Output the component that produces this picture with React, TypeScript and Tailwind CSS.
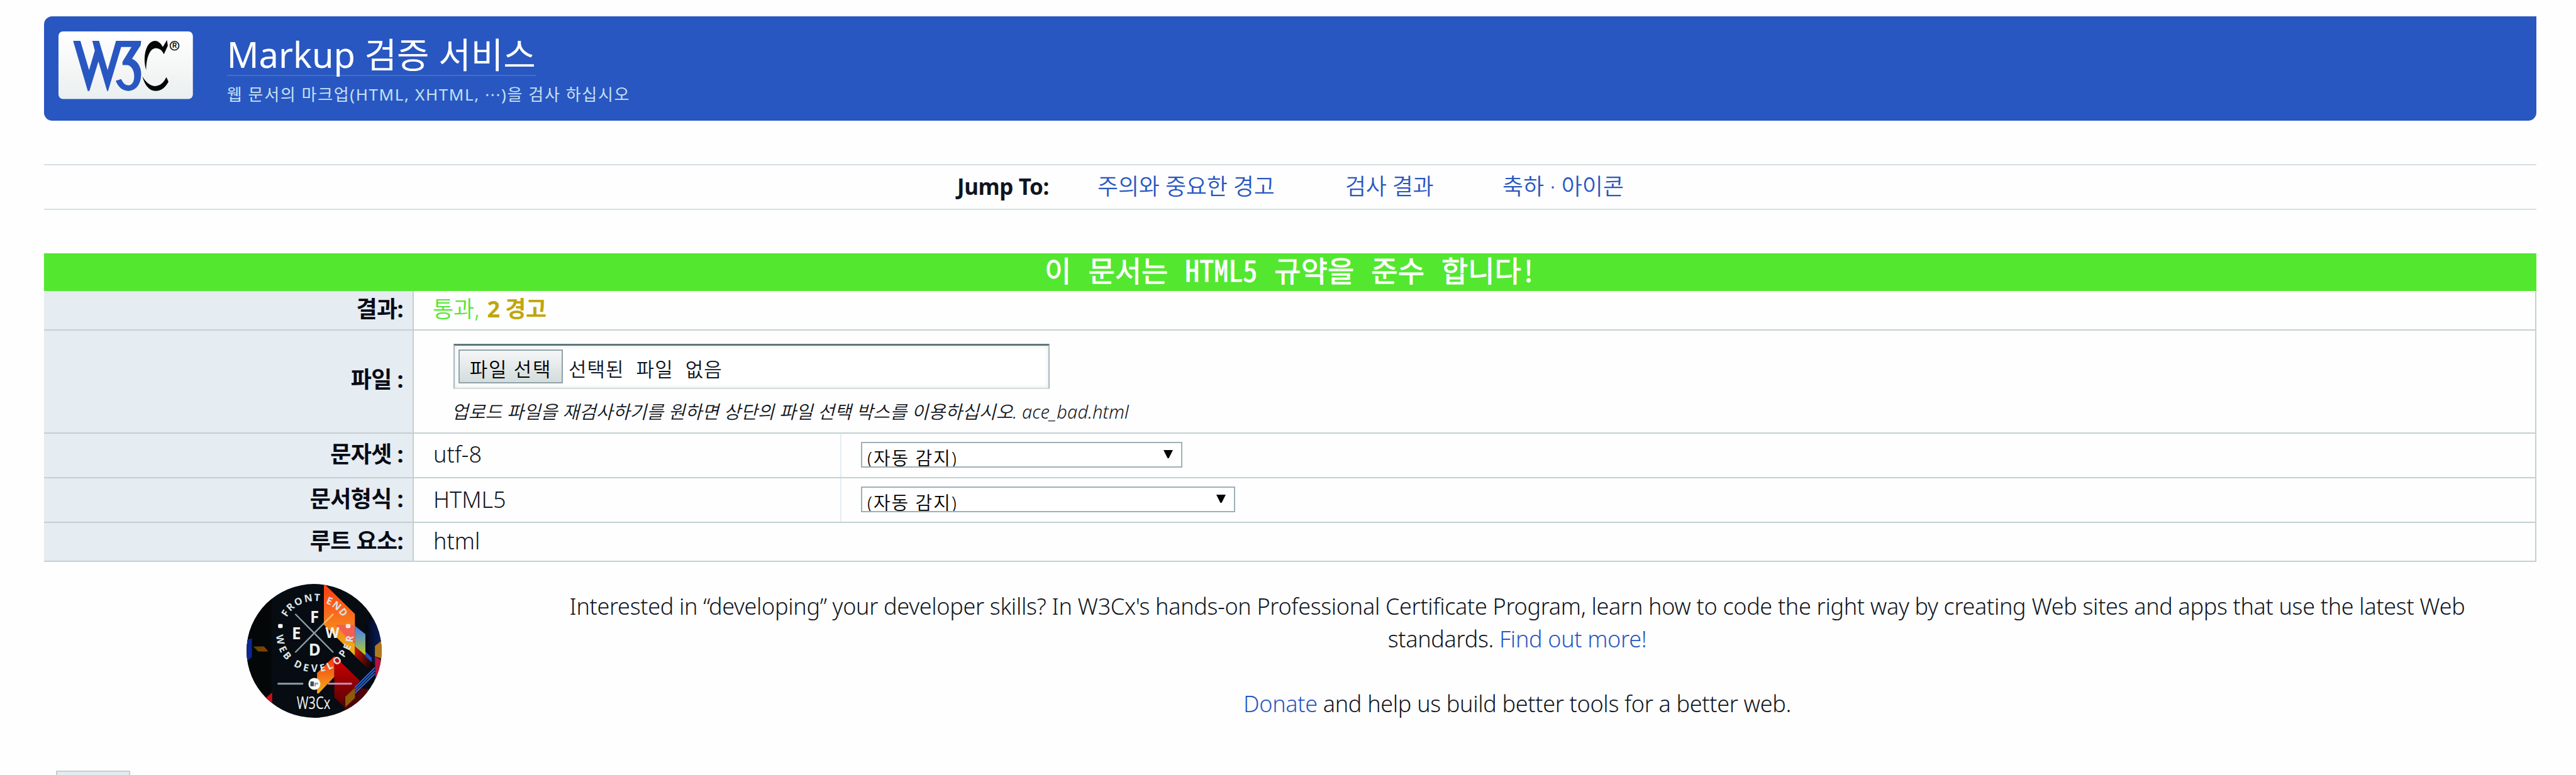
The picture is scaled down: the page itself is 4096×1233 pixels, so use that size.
import type { ReactNode } from "react";

const FRONT_END: [string, number, number, number][] = [
  ["F", 535, 378, -56], ["R", 582, 320, -42], ["O", 655, 270, -26], ["N", 748, 238, -10], ["T", 830, 232, 4],
  ["E", 945, 264, 22], ["N", 1012, 308, 38], ["D", 1072, 368, 54],
];
const WEB_DEVELOPER: [string, number, number, number][] = [
  ["W", 490, 622, 80], ["E", 515, 710, 64], ["B", 555, 770, 50], ["D", 655, 850, 26], ["E", 728, 880, 13],
  ["V", 805, 885, 0], ["E", 880, 880, -13], ["L", 945, 862, -26], ["O", 1015, 815, -40], ["P", 1068, 750, -54],
  ["E", 1108, 690, -66], ["R", 1130, 615, -80],
];

function T({ className = "", children }: { className?: string; children: ReactNode }) {
  return <span className={`whitespace-nowrap ${className}`}>{children}</span>;
}

function W3CLogo() {
  return (
    <svg viewBox="60 48 1239 624" preserveAspectRatio="none" className="h-[107.6px] w-[213.7px]">
      <defs>
        <linearGradient id="plate" x1="0" y1="0" x2="0" y2="1">
          <stop offset="0" stopColor="#ffffff" />
          <stop offset="0.6" stopColor="#f4f5f5" />
          <stop offset="1" stopColor="#e9eff0" />
        </linearGradient>
      </defs>
      <rect x="60" y="48" width="1239" height="624" rx="42" fill="url(#plate)" />
      <path fill="#2957c1" d="M195 135H262L342 405L395 225L372 135H434L513 405L590 135H822L818 175L738 300C800 325 822 390 822 440C822 540 770 597 705 597C645 597 605 550 588 503L638 487C655 525 675 545 705 545C740 545 758 510 758 460C758 400 725 358 690 358H650V328L733 192H638L517 597H508L428 325L345 597H330Z" />
      <path fill="#050607" d="M1060 128L1068 180L1032 258C1010 215 985 200 950 203C900 212 870 290 868 405C845 330 850 240 880 185C920 118 985 118 1022 192Z" />
      <path fill="#050607" d="M833 462C865 515 900 550 955 552C1000 548 1030 520 1055 470L1074 512C1045 565 1010 597 955 597C900 597 855 545 833 462Z" />
      <circle cx="1130" cy="180" r="40" fill="none" stroke="#26302f" strokeWidth="11" />
      <text x="1130" y="201" textAnchor="middle" fontSize="58" fontWeight="700" fill="#050607" className="font-['Liberation_Sans',sans-serif]">R</text>
    </svg>
  );
}

function Badge() {
  return (
    <svg viewBox="178 108 1250 1235" preserveAspectRatio="none" className="h-[213px] w-[215px]">
      <defs>
        <clipPath id="disc"><ellipse cx="803" cy="725.5" rx="624" ry="617" /></clipPath>
        <linearGradient id="flame" x1="0" y1="0" x2="0" y2="1">
          <stop offset="0" stopColor="#fb3d15" /><stop offset="0.4" stopColor="#fa6a1c" /><stop offset="1" stopColor="#e9b81c" />
        </linearGradient>
        <linearGradient id="ember" x1="0" y1="0" x2="0" y2="1">
          <stop offset="0" stopColor="#fb3010" /><stop offset="1" stopColor="#ecb01c" />
        </linearGradient>
        <linearGradient id="blood" x1="0" y1="0" x2="0" y2="1">
          <stop offset="0" stopColor="#d80000" /><stop offset="1" stopColor="#4d0004" />
        </linearGradient>
        <linearGradient id="sea" x1="0" y1="0" x2="0" y2="1">
          <stop offset="0" stopColor="#3f7cf0" /><stop offset="0.45" stopColor="#6f9fa8" /><stop offset="1" stopColor="#c3cc14" />
        </linearGradient>
        <linearGradient id="fade" x1="0" y1="0" x2="1" y2="0.6">
          <stop offset="0" stopColor="#d41500" /><stop offset="1" stopColor="#120508" />
        </linearGradient>
        <linearGradient id="navy" x1="0" y1="0" x2="1" y2="0">
          <stop offset="0" stopColor="#03060e" /><stop offset="1" stopColor="#0a1f66" />
        </linearGradient>
        <linearGradient id="rust" x1="0" y1="0" x2="1" y2="0">
          <stop offset="0" stopColor="#4f4a00" /><stop offset="1" stopColor="#9c3b00" />
        </linearGradient>
      </defs>
      <g clipPath="url(#disc)">
        <rect x="178" y="108" width="1250" height="1235" fill="#070b12" />
        <rect x="178" y="108" width="230" height="1235" fill="#040708" />
        <path d="M1275 470L1340 440L1428 430V660L1365 690V860L1275 740Z" fill="url(#navy)" />
        <path d="M178 625L228 610V780L190 815H178Z" fill="#0d2791" />
        <path d="M240 685H340L378 731H285Z" fill="url(#rust)" />
        <path d="M355 1160L415 1110V1210Z" fill="#c8101c" />
        <path d="M893 108L905 115L1180 385V770L893 485Z" fill="url(#flame)" />
        <path d="M1000 485H1180V660L1110 610Z" fill="#f4604f" />
        <path d="M1180 495L1277 572V768L1180 685Z" fill="url(#sea)" />
        <path d="M1180 685L1277 768L1345 830V910L1310 900L1180 775Z" fill="url(#fade)" />
        <path d="M1277 732L1335 790V830L1277 775Z" fill="#1f4fc4" />
        <path d="M1365 680L1428 630V800L1365 775Z" fill="#b07a1a" />
        <path d="M1365 775L1428 815V985H1370Z" fill="#b5143a" />
        <path d="M830 930L990 775V965L845 1118H830Z" fill="url(#ember)" />
        <path d="M990 775L1050 830L1225 1000L1180 1060L1310 1080L1200 1260H1095L990 1155Z" fill="url(#blood)" />
        <path d="M1180 1060L1300 1080L1200 1270H1085L1080 1160Z" fill="#4b0509" />
        <path d="M1090 1150L1180 1065V1160L1092 1245Z" fill="#8f5a05" />
        <path d="M1180 1065L1365 880M1180 1090L1365 908M1180 1115L1365 936" stroke="#2f66d6" strokeWidth="12" />
      </g>
      <path d="M628 385L980 740" stroke="#8c9ea4" strokeWidth="14" />
      <path d="M628 740L895 470" stroke="#8c9ea4" strokeWidth="14" />
      <path d="M895 470L980 385" stroke="#f8bd74" strokeWidth="14" />
      <path d="M465 1028H702" stroke="#8c9ea4" strokeWidth="17" />
      <path d="M930 1028H1152" stroke="#c98db4" strokeWidth="17" />
      <g className="font-['Open_Sans','Noto_Sans',sans-serif]" fill="#eef3f3" textAnchor="middle" fontWeight="700">
        <g fontSize="150">
          <text x="807" y="466">F</text>
          <text x="638" y="616">E</text>
          <text x="972" y="608" fontSize="132">W</text>
          <text x="807" y="770">D</text>
        </g>
        <g fontSize="92" fill="#dbe5e6">
          {[...FRONT_END, ...WEB_DEVELOPER].map(([c, x, y, r], i) => (
            <text key={i} transform={`translate(${x} ${y}) rotate(${r})`} y="33">{c}</text>
          ))}
        </g>
        <text x="797" y="1263" fontSize="162" fontWeight="500" textLength="312" lengthAdjust="spacingAndGlyphs">W3Cx</text>
      </g>
      <rect x="470" y="477" width="42" height="38" rx="10" fill="#f4f7f7" />
      <rect x="1096" y="477" width="42" height="38" rx="10" fill="#ffe6e0" />
      <circle cx="805" cy="1030" r="55" fill="#f8fafa" />
      <path d="M768 1008H800V1052H768Z" fill="#3f4b50" />
      <path d="M806 1020H840V1034H818V1052H806Z" fill="#8b9698" />
    </svg>
  );
}

function Row({ label, labelTop, height, children }: { label: string; labelTop: string; height: string; children: ReactNode }) {
  return (
    <div className={`flex border-b-2 border-[#c3d0d1] ${height}`}>
      <div className={`flex w-[588px] shrink-0 justify-end border-r-2 border-[#c3d0d1] bg-[#e5ecf2] pr-[15px] font-bold text-[#090b15] ${labelTop}`}>
        <T className="h-[50px] text-[36px] leading-[50px] tracking-[-0.6px]">{label}</T>
      </div>
      {children}
    </div>
  );
}

function Select({ className }: { className: string }) {
  return (
    <div className={`ml-[31px] flex h-[41px] justify-between overflow-hidden border-2 border-[#9fb0b4] bg-white pr-[13px] pl-[8px] ${className}`}>
      <T className="pt-[6px] text-[29px] leading-[36px] tracking-[1.9px] text-black">(자동 감지)</T>
      <svg viewBox="0 0 15 13" className="mt-[11px] h-[13px] w-[15px]"><path d="M0 0H15L8.5 13H6.5Z" fill="#050505" /></svg>
    </div>
  );
}

export default function App() {
  return (
    <div className="h-[1233px] w-[4096px] overflow-hidden bg-[#fefefe] pt-[26px] pl-[70px] font-[350] text-[#101520] font-['Noto_Sans','Noto_Sans_CJK_KR',sans-serif]">
      <header className="flex h-[166px] w-[3963px] rounded-[13px] rounded-tr-none bg-[#2957c1] pt-[24px] pl-[23px]">
        <W3CLogo />
        <div className="ml-[54px] flex flex-col items-start">
          <T className="h-[70.5px] border-b-2 border-[#4170be] text-[56px] leading-[72px] font-normal text-white">Markup 검증 서비스</T>
          <T className="mt-[9px] text-[26px] leading-[40px] font-normal tracking-[1.62px] text-[#c5e1f4]">웹 문서의 마크업(HTML, XHTML, ···)을 검사 하십시오</T>
        </div>
      </header>
      <nav className="mt-[69px] flex h-[73px] w-[3963px] border-y-2 border-[#d5e0e3] pl-[1452px] text-[36px] leading-[68px] text-[#2957c1]">
        <div className="w-[223px] text-[35px] font-bold text-[#101520]"><T className="tracking-[-0.4px]">Jump To:</T></div>
        <div className="w-[394px]"><T className="tracking-[-0.2px]">주의와 중요한 경고</T></div>
        <div className="w-[250px]"><T className="tracking-[-0.3px]">검사 결과</T></div>
        <div><T>축하 · 아이콘</T></div>
      </nav>
      <main className="mt-[69px] w-[3963px]">
        <h2 className="h-[60px] bg-[#53e730] text-center text-[46px] leading-[50px] font-normal text-white font-['Noto_Sans_Mono_CJK_KR','Noto_Sans_CJK_KR',monospace] [-webkit-text-stroke:0.9px_white] [word-spacing:4px]">
          <T>이 문서는 HTML5 규약을 준수 합니다!</T>
        </h2>
        <div className="border-r-2 border-[#c3d0d1]">
          <Row label="결과:" labelTop="pt-[4px]" height="h-[63px]">
            <div className="pt-[4px] pl-[30px] text-[36px] leading-[50px]">
              <T className="text-[#52e631]">통과,</T>
              <T className="ml-[12px] font-bold tracking-[-0.5px] text-[#c0a60d]">2 경고</T>
            </div>
          </Row>
          <Row label="파일 :" labelTop="pt-[53px]" height="h-[164px]">
            <div className="pl-[63px]">
              <div className="mt-[21px] flex h-[72px] w-[948px] border-x-2 border-t-[3px] border-b-2 border-x-[#a9bbc0] border-t-[#60757d] border-b-[#d3dddd] bg-white pt-[6px] pl-[6px] shadow-[inset_0_0_6px_1px_#e6eaeb]">
                <div className="h-[54px] w-[166px] border-2 border-[#8fa2a8] bg-linear-to-b from-[#f5f6f7] to-[#d3dcdc] text-center">
                  <T className="text-[31px] leading-[58px] tracking-[1.7px] text-black">파일 선택</T>
                </div>
                <T className="ml-[9px] text-[31px] leading-[62px] tracking-[1px] [word-spacing:10px]">선택된 파일 없음</T>
              </div>
              <div className="mt-[16px] -ml-[3px] text-[29px] leading-[40px] tracking-[0.13px] italic"><T>업로드 파일을 재검사하기를 원하면 상단의 파일 선택 박스를 이용하십시오. ace_bad.html</T></div>
            </div>
          </Row>
          <Row label="문자셋 :" labelTop="pt-[8px]" height="h-[71px]">
            <div className="w-[680px] border-r-2 border-[#e4ecf3] pt-[8px] pl-[31px] text-[36px] leading-[50px]"><T>utf-8</T></div>
            <div className="pt-[13px]"><Select className="w-[511px]" /></div>
          </Row>
          <Row label="문서형식 :" labelTop="pt-[8px]" height="h-[71px]">
            <div className="w-[680px] border-r-2 border-[#e4ecf3] pt-[9px] pl-[31px] text-[36px] leading-[50px]"><T>HTML5</T></div>
            <div className="pt-[13px]"><Select className="w-[595px]" /></div>
          </Row>
          <Row label="루트 요소:" labelTop="pt-[4px]" height="h-[62px]">
            <div className="pt-[4px] pl-[31px] text-[36px] leading-[50px]"><T>html</T></div>
          </Row>
        </div>
      </main>
      <section className="flex h-[332px]">
        <div className="mt-[35px] ml-[322px]"><Badge /></div>
        <p className="mt-[45px] ml-[185px] w-[3241px] text-center text-[36px] leading-[51.7px] tracking-[-0.33px] whitespace-nowrap">
          Interested in “developing” your developer skills? In W3Cx's hands-on Professional Certificate Program, learn how to code the right way by creating Web sites and apps that use the latest Web
          <br />
          standards. <a className="text-[#2957c1]">Find out more!</a>
          <br />
          <br />
          <a className="text-[#2957c1]">Donate</a> and help us build better tools for a better web.
        </p>
      </section>
      <div className="ml-[19px] h-[40px] w-[118px] border-2 border-[#c3d0d1] bg-[#e5ecf0]" />
    </div>
  );
}
